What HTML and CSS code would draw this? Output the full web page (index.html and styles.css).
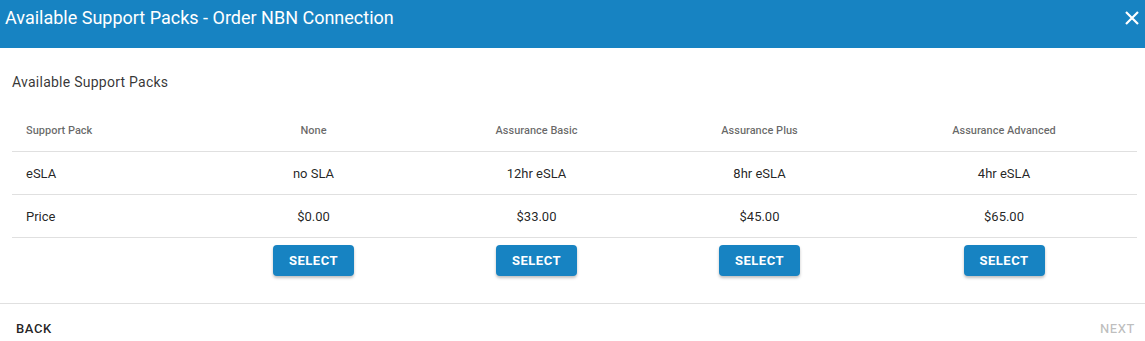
FILE: index.html
```html
<!DOCTYPE html>
<html lang="en">
<head>
    <meta charset="UTF-8">
    <title>Available Support Packs - Order NBN Connection</title>
    <link rel="stylesheet" href="styles.css">
</head>
<body>
    <div class="dialog">
        <div class="toolbar">
            <div class="toolbar-title">Available Support Packs - Order NBN Connection</div>
            <button class="close-btn" aria-label="Close">
                <svg width="14" height="14" viewBox="0 0 14 14">
                    <path d="M1 1 L13 13 M13 1 L1 13" stroke="#fff" stroke-width="2.2" fill="none"/>
                </svg>
            </button>
        </div>
        <div class="content">
            <div class="subtitle">Available Support Packs</div>
            <table class="packs">
                <colgroup>
                    <col class="col-label">
                    <col class="col-pack">
                    <col class="col-pack">
                    <col class="col-pack">
                    <col>
                </colgroup>
                <thead>
                    <tr>
                        <th class="left">Support Pack</th>
                        <th>None</th>
                        <th>Assurance Basic</th>
                        <th>Assurance Plus</th>
                        <th>Assurance Advanced</th>
                    </tr>
                </thead>
                <tbody>
                    <tr>
                        <td class="left">eSLA</td>
                        <td>no SLA</td>
                        <td>12hr eSLA</td>
                        <td>8hr eSLA</td>
                        <td>4hr eSLA</td>
                    </tr>
                    <tr>
                        <td class="left">Price</td>
                        <td>$0.00</td>
                        <td>$33.00</td>
                        <td>$45.00</td>
                        <td>$65.00</td>
                    </tr>
                    <tr class="actions">
                        <td></td>
                        <td><button class="select-btn">Select</button></td>
                        <td><button class="select-btn">Select</button></td>
                        <td><button class="select-btn">Select</button></td>
                        <td><button class="select-btn">Select</button></td>
                    </tr>
                </tbody>
            </table>
        </div>
        <div class="footer">
            <button class="text-btn">Back</button>
            <button class="text-btn disabled">Next</button>
        </div>
    </div>
</body>
</html>
```

FILE: styles.css
```css
/* dialog layout */
body {
    margin: 0;
    font-family: Roboto, "Liberation Sans", Arial, sans-serif;
    background-color: #ffffff;
    color: rgba(0, 0, 0, 0.87);
}
.dialog {
    width: 1145px;
    height: 341px;
    display: flex;
    flex-direction: column;
}
.toolbar {
    background-color: #1783c2;
    height: 48px;
    display: flex;
    align-items: center;
    justify-content: space-between;
    padding: 0 3px 0 5px;
}
.toolbar-title {
    color: #ffffff;
    font-size: 18px;
    font-weight: 400;
    margin-top: -13px;
}
.close-btn {
    background: none;
    border: none;
    padding: 0;
    width: 14px;
    height: 14px;
    display: flex;
    margin: -12px 3px 0 0;
    cursor: pointer;
}
.content {
    padding: 24px 8px 0 12px;
    flex: 1;
}
.subtitle {
    font-size: 14px;
    line-height: 20px;
    letter-spacing: 0.25px;
    color: rgba(0, 0, 0, 0.8);
}
.packs {
    width: 100%;
    border-collapse: collapse;
    margin-top: 17px;
    font-size: 13px;
}
.col-label {
    width: 190px;
}
.col-pack {
    width: 223px;
}
.packs th {
    height: 42px;
    font-size: 11px;
    font-weight: 500;
    color: rgba(0, 0, 0, 0.6);
    text-align: center;
    border-bottom: 1px solid #e0e0e0;
    padding: 0;
}
.packs td {
    height: 42px;
    text-align: center;
    border-bottom: 1px solid #e0e0e0;
    padding: 0;
}
.packs .left {
    text-align: left;
    padding-left: 14px;
}
.packs .actions td {
    border-bottom: none;
    height: 43px;
    vertical-align: top;
    padding-top: 7px;
}
.select-btn {
    background-color: #1783c2;
    color: #ffffff;
    border: none;
    border-radius: 4px;
    font-family: inherit;
    font-size: 13px;
    font-weight: 700;
    letter-spacing: 0.5px;
    text-transform: uppercase;
    width: 81px;
    height: 31px;
    box-shadow: 0 2px 3px rgba(0, 0, 0, 0.25);
    cursor: pointer;
}
.footer {
    border-top: 1px solid #e0e0e0;
    height: 48px;
    display: flex;
    align-items: center;
    justify-content: space-between;
    padding: 0 10px 0 16px;
    margin-bottom: -11px;
}
.text-btn {
    background: none;
    border: none;
    padding: 0;
    font-family: inherit;
    font-size: 13px;
    font-weight: 500;
    letter-spacing: 0.6px;
    text-transform: uppercase;
    color: rgba(0, 0, 0, 0.87);
    cursor: pointer;
}
.text-btn.disabled {
    color: rgba(0, 0, 0, 0.26);
}
```
